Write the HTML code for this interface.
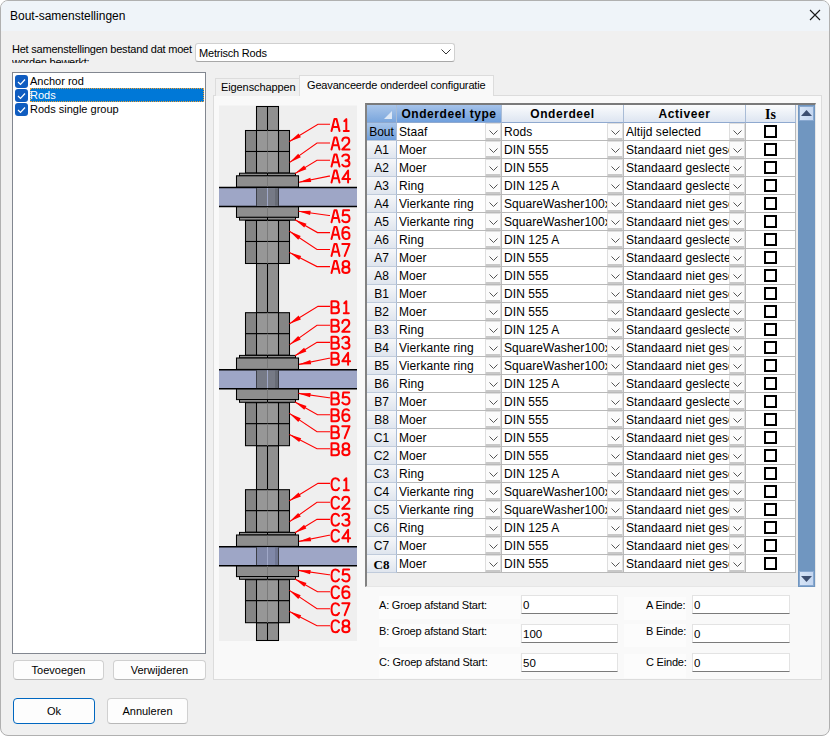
<!DOCTYPE html>
<html><head><meta charset="utf-8"><style>
*{box-sizing:border-box;margin:0;padding:0}
html,body{width:831px;height:737px;overflow:hidden;background:#ffffff;font-family:"Liberation Sans",sans-serif;}
.abs{position:absolute}
#win{position:absolute;left:0px;top:0px;width:830px;height:736px;border:1px solid #b0b0b0;border-radius:8px;background:#f0f0f0;overflow:hidden}
#title{position:absolute;left:0;top:0;width:100%;height:30px;background:#eff4f9}
.t11{font-size:11px;color:#000;white-space:nowrap;position:absolute}
.btn{position:absolute;background:#fdfdfd;border:1px solid #d0d0d0;border-bottom-color:#b8b8b8;border-radius:4px;font-size:11px;text-align:center}
.rh{position:absolute;left:367px;width:30px;height:18px;background:linear-gradient(#f6f7f9,#dfe5ee);border-bottom:1px solid #c0cbdb;border-right:1px solid #a9bcd6;font-size:12px;text-align:center;line-height:18px;color:#000}
.rh span{position:relative;top:0px}
.rh.cur{background:linear-gradient(#a9c6ea,#6f9fdc)}
.c{position:absolute;height:18px;background:#fff;border-right:1px solid #b9b9b9;border-bottom:1px solid #b9b9b9}
.tx{position:absolute;left:2px;top:0;line-height:19px;font-size:12px;letter-spacing:0.07px;white-space:nowrap;overflow:hidden;color:#000}
.dd{position:absolute;right:0px;top:0px;width:16px;height:17px;background:#fbfbfb;border:1px solid #dedede;border-bottom:2px solid #c8c8c8;border-radius:1px}
.cb{position:absolute;left:18px;top:2px;width:13px;height:13px;border:2px solid #000;background:#fff}
.hd{position:absolute;top:105px;height:18px;background:linear-gradient(#fbfcfd,#dde5f1);border-right:1px solid #a9bcd6;border-bottom:1px solid #8fa9cf;font-weight:bold;font-size:12px;letter-spacing:0.55px;text-align:center;line-height:19px;color:#000}
.lbl{font-family:"Liberation Sans",sans-serif;font-size:18.5px;fill:#ff0000;letter-spacing:-0.5px}
.tb{position:absolute;background:#fff;border:1px solid #e3e3e3;border-bottom:1px solid #7a7a7a;font-size:11.5px;line-height:19px;padding-left:1px}
.lp{position:absolute;background:#fcfcfc}
</style></head>
<body>
<div id="win">
 <div id="title"></div>
</div>
<div class="t11" style="left:10px;top:9px;font-size:12px">Bout-samenstellingen</div>
<svg class="abs" style="left:809px;top:9px" width="12" height="12" viewBox="0 0 12 12"><path d="M1 1L11 11M11 1L1 11" stroke="#1a1a1a" stroke-width="1.1"/></svg>

<div class="t11" style="left:12px;top:43px;height:20px;overflow:hidden;width:182px;line-height:13px;letter-spacing:-0.22px">Het samenstellingen bestand dat moet<br>worden bewerkt:</div>
<div class="abs" style="left:195px;top:43px;width:260px;height:19px;background:#fff;border:1px solid #d0d0d0;border-bottom-color:#a8a8a8;border-radius:3px"></div>
<div class="t11" style="left:199px;top:46.5px;letter-spacing:-0.2px">Metrisch Rods</div>
<svg class="abs" style="left:441px;top:49px" width="10" height="6" viewBox="0 0 10 6"><path d="M0.5 0.5L5 5L9.5 0.5" fill="none" stroke="#333" stroke-width="1"/></svg>

<div class="abs" style="left:12px;top:72px;width:194px;height:582px;background:#fff;border:1px solid #828790"></div>
<div class="abs" style="left:30px;top:88px;width:174px;height:14px;background:#0078d7;border:1px dotted #f0a030"></div>
<div class="abs" style="left:15px;top:75px;width:13px;height:13px;background:#0f5cc0;border-radius:3px"></div>
<div class="abs" style="left:15px;top:89px;width:13px;height:13px;background:#0f5cc0;border-radius:3px"></div>
<div class="abs" style="left:15px;top:103px;width:13px;height:13px;background:#0f5cc0;border-radius:3px"></div>
<svg class="abs" style="left:15px;top:75px" width="13" height="42" viewBox="0 0 13 42"><path d="M3 7L5.5 9.5L10 4.5M3 21L5.5 23.5L10 18.5M3 35L5.5 37.5L10 32.5" fill="none" stroke="#fff" stroke-width="1.2"/></svg>
<div class="t11" style="left:30px;top:75px">Anchor rod</div>
<div class="t11" style="left:30px;top:89px;color:#fff">Rods</div>
<div class="t11" style="left:30px;top:103px">Rods single group</div>

<div class="btn" style="left:13px;top:660px;width:91px;height:20px;line-height:18px">Toevoegen</div>
<div class="btn" style="left:113px;top:660px;width:93px;height:20px;line-height:18px">Verwijderen</div>
<div class="btn" style="left:13px;top:698px;width:82px;height:26px;line-height:24px;border:1px solid #0067c0;border-radius:4px">Ok</div>
<div class="btn" style="left:107px;top:698px;width:81px;height:26px;line-height:24px">Annuleren</div>

<!-- tab control -->
<div class="abs" style="left:213px;top:95px;width:609px;height:585px;background:#f9f9f9;border:1px solid #dcdcdc"></div>
<div class="abs" style="left:215px;top:78px;width:85px;height:18px;background:#f0f0f0;border:1px solid #dcdcdc;border-bottom:none"></div>
<div class="t11" style="left:221px;top:81px;font-size:11px;letter-spacing:-0.1px">Eigenschappen</div>
<div class="abs" style="left:299px;top:75px;width:195px;height:21px;background:#f9f9f9;border:1px solid #dcdcdc;border-bottom:none"></div>
<div class="t11" style="left:307px;top:79px;font-size:11px;letter-spacing:-0.16px">Geavanceerde onderdeel configuratie</div>

<svg width="831" height="737" style="position:absolute;left:0;top:0" viewBox="0 0 831 737">
<rect x="219" y="105.5" width="138" height="535.5" fill="#efefef"/>
<rect x="256.5" y="106.5" width="22" height="534" fill="#909090" stroke="#000" stroke-width="1.05"/>
<line x1="267.5" y1="106.5" x2="267.5" y2="640" stroke="#000" stroke-width="1.05"/>
<g transform="translate(0,0)">
<rect x="245.5" y="130.5" width="44" height="21.0" fill="#858585" stroke="#000" stroke-width="1.05"/><rect x="256.5" y="130.5" width="22" height="21.0" fill="#979797" stroke="#000" stroke-width="1.05"/><line x1="267.5" y1="130.5" x2="267.5" y2="151.5" stroke="#7a7a7a" stroke-width="1"/>
<rect x="245.5" y="151.5" width="44" height="21.5" fill="#858585" stroke="#000" stroke-width="1.05"/><rect x="256.5" y="151.5" width="22" height="21.5" fill="#979797" stroke="#000" stroke-width="1.05"/><line x1="267.5" y1="151.5" x2="267.5" y2="173" stroke="#7a7a7a" stroke-width="1"/>
<rect x="239.5" y="173.2" width="56" height="2.6" fill="#8c8c8c" stroke="#000" stroke-width="1"/>
<line x1="267.5" y1="173" x2="267.5" y2="176" stroke="#000" stroke-width="1"/>
<rect x="236.5" y="175.8" width="62" height="11.4" fill="#8e8e8e" stroke="#000" stroke-width="1.05"/>
<line x1="267.5" y1="176.5" x2="267.5" y2="187" stroke="#7a7a7a" stroke-width="1"/>
<rect x="219" y="187.5" width="138" height="19" fill="#9ea6c6" stroke="none"/>
<line x1="219" y1="187.5" x2="357" y2="187.5" stroke="#000" stroke-width="1.4"/>
<line x1="219" y1="206.5" x2="357" y2="206.5" stroke="#000" stroke-width="1.4"/>
<rect x="256.5" y="188.2" width="22" height="17.6" fill="#767a86"/><rect x="275" y="188.2" width="3.5" height="17.6" fill="#000" opacity="0.12"/>
<line x1="256.5" y1="188" x2="256.5" y2="206" stroke="#3c3f48" stroke-width="1"/>
<line x1="278.5" y1="188" x2="278.5" y2="206" stroke="#3c3f48" stroke-width="1"/>
<line x1="267.5" y1="188" x2="267.5" y2="206" stroke="#a0a8c8" stroke-width="1"/>
<rect x="236.5" y="206.8" width="62" height="10.6" fill="#8e8e8e" stroke="#000" stroke-width="1.05"/>
<line x1="267.5" y1="207" x2="267.5" y2="217" stroke="#7a7a7a" stroke-width="1"/>
<rect x="239.5" y="217.3" width="56" height="2.8" fill="#8c8c8c" stroke="#000" stroke-width="1"/>
<line x1="267.5" y1="217" x2="267.5" y2="220" stroke="#000" stroke-width="1"/>
<rect x="245.5" y="220.5" width="44" height="21.0" fill="#858585" stroke="#000" stroke-width="1.05"/><rect x="256.5" y="220.5" width="22" height="21.0" fill="#979797" stroke="#000" stroke-width="1.05"/><line x1="267.5" y1="220.5" x2="267.5" y2="241.5" stroke="#7a7a7a" stroke-width="1"/>
<rect x="245.5" y="241.5" width="44" height="22.0" fill="#858585" stroke="#000" stroke-width="1.05"/><rect x="256.5" y="241.5" width="22" height="22.0" fill="#979797" stroke="#000" stroke-width="1.05"/><line x1="267.5" y1="241.5" x2="267.5" y2="263.5" stroke="#7a7a7a" stroke-width="1"/>
<polyline points="330,124.2 318,124.2 289.5,141.5" fill="none" stroke="#ff0000" stroke-width="1.1"/>
<polygon points="289.5,141.5 298.6,133.4 300.9,137.2" fill="#ff0000"/>
<path d="M0,12 L3,0 L5,0 L8,12 M1.3,7.8 L6.7,7.8" transform="translate(331.50,119.10) scale(1.000)" fill="none" stroke="#ff0000" stroke-width="2.00" stroke-linejoin="round" stroke-linecap="round"/><path d="M2,2 L4,0 L4,12 M1.5,12 L6.5,12" transform="translate(342.30,119.10) scale(1.000)" fill="none" stroke="#ff0000" stroke-width="2.00" stroke-linejoin="round" stroke-linecap="round"/>
<polyline points="330,143.0 317,143.0 289.7,162.4" fill="none" stroke="#ff0000" stroke-width="1.1"/>
<polygon points="289.7,162.4 298.2,153.7 300.8,157.2" fill="#ff0000"/>
<path d="M0,12 L3,0 L5,0 L8,12 M1.3,7.8 L6.7,7.8" transform="translate(331.50,137.50) scale(1.000)" fill="none" stroke="#ff0000" stroke-width="2.00" stroke-linejoin="round" stroke-linecap="round"/><path d="M0,3.2 Q0.3,0 3.6,0 Q7,0 7,3.4 Q7,5.8 3.5,8.3 L0,12 L7.2,12" transform="translate(342.30,137.50) scale(1.000)" fill="none" stroke="#ff0000" stroke-width="2.00" stroke-linejoin="round" stroke-linecap="round"/>
<polyline points="330,160.2 317,160.2 295.0,173.6" fill="none" stroke="#ff0000" stroke-width="1.1"/>
<polygon points="295.0,173.6 304.1,165.5 306.4,169.2" fill="#ff0000"/>
<path d="M0,12 L3,0 L5,0 L8,12 M1.3,7.8 L6.7,7.8" transform="translate(331.50,154.50) scale(1.000)" fill="none" stroke="#ff0000" stroke-width="2.00" stroke-linejoin="round" stroke-linecap="round"/><path d="M0,1.8 Q1,0 3.5,0 Q6.8,0 6.8,3 Q6.8,6 3.2,6 Q7.2,6 7.2,9 Q7.2,12 3.6,12 Q1,12 0,10.2" transform="translate(342.30,154.50) scale(1.000)" fill="none" stroke="#ff0000" stroke-width="2.00" stroke-linejoin="round" stroke-linecap="round"/>
<polyline points="330,176.1 329,176.1 299.0,182.2" fill="none" stroke="#ff0000" stroke-width="1.1"/>
<polygon points="299.0,182.2 310.3,177.7 311.2,182.0" fill="#ff0000"/>
<path d="M0,12 L3,0 L5,0 L8,12 M1.3,7.8 L6.7,7.8" transform="translate(331.50,170.50) scale(1.000)" fill="none" stroke="#ff0000" stroke-width="2.00" stroke-linejoin="round" stroke-linecap="round"/><path d="M5.8,12 L5.8,0 L0,8.5 L7.8,8.5" transform="translate(342.30,170.50) scale(1.000)" fill="none" stroke="#ff0000" stroke-width="2.00" stroke-linejoin="round" stroke-linecap="round"/>
<polyline points="330,215.5 329,215.5 298.5,211.2" fill="none" stroke="#ff0000" stroke-width="1.1"/>
<polygon points="298.5,211.2 310.7,210.7 310.1,215.1" fill="#ff0000"/>
<path d="M0,12 L3,0 L5,0 L8,12 M1.3,7.8 L6.7,7.8" transform="translate(331.50,210.20) scale(1.000)" fill="none" stroke="#ff0000" stroke-width="2.00" stroke-linejoin="round" stroke-linecap="round"/><path d="M6.8,0 L1,0 L0.4,5.2 Q1.8,4.6 3.6,4.6 Q7.2,4.6 7.2,8.3 Q7.2,12 3.6,12 Q1,12 0,10.2" transform="translate(342.30,210.20) scale(1.000)" fill="none" stroke="#ff0000" stroke-width="2.00" stroke-linejoin="round" stroke-linecap="round"/>
<polyline points="330,232.6 317.5,232.6 295.0,219.8" fill="none" stroke="#ff0000" stroke-width="1.1"/>
<polygon points="295.0,219.8 306.5,223.8 304.3,227.6" fill="#ff0000"/>
<path d="M0,12 L3,0 L5,0 L8,12 M1.3,7.8 L6.7,7.8" transform="translate(331.50,227.00) scale(1.000)" fill="none" stroke="#ff0000" stroke-width="2.00" stroke-linejoin="round" stroke-linecap="round"/><path d="M6.6,1.2 Q5.4,0 3.8,0 Q0,0 0,6.3 Q0,12 3.6,12 Q7.2,12 7.2,8.4 Q7.2,5 3.6,5 Q1.2,5 0,7" transform="translate(342.30,227.00) scale(1.000)" fill="none" stroke="#ff0000" stroke-width="2.00" stroke-linejoin="round" stroke-linecap="round"/>
<polyline points="330,249.5 317,249.5 289.5,231.2" fill="none" stroke="#ff0000" stroke-width="1.1"/>
<polygon points="289.5,231.2 300.7,236.0 298.3,239.7" fill="#ff0000"/>
<path d="M0,12 L3,0 L5,0 L8,12 M1.3,7.8 L6.7,7.8" transform="translate(331.50,244.00) scale(1.000)" fill="none" stroke="#ff0000" stroke-width="2.00" stroke-linejoin="round" stroke-linecap="round"/><path d="M0,0 L7.2,0 L2.4,12" transform="translate(342.30,244.00) scale(1.000)" fill="none" stroke="#ff0000" stroke-width="2.00" stroke-linejoin="round" stroke-linecap="round"/>
<polyline points="330,266.6 317,266.6 289.5,252.4" fill="none" stroke="#ff0000" stroke-width="1.1"/>
<polygon points="289.5,252.4 301.2,256.0 299.2,259.9" fill="#ff0000"/>
<path d="M0,12 L3,0 L5,0 L8,12 M1.3,7.8 L6.7,7.8" transform="translate(331.50,261.00) scale(1.000)" fill="none" stroke="#ff0000" stroke-width="2.00" stroke-linejoin="round" stroke-linecap="round"/><path d="M3.6,6 Q6.9,6 6.9,3 Q6.9,0 3.6,0 Q0.3,0 0.3,3 Q0.3,6 3.6,6 Q7.2,6 7.2,9 Q7.2,12 3.6,12 Q0,12 0,9 Q0,6 3.6,6" transform="translate(342.30,261.00) scale(1.000)" fill="none" stroke="#ff0000" stroke-width="2.00" stroke-linejoin="round" stroke-linecap="round"/>
</g>
<g transform="translate(0,182.2)">
<rect x="245.5" y="130.5" width="44" height="21.0" fill="#858585" stroke="#000" stroke-width="1.05"/><rect x="256.5" y="130.5" width="22" height="21.0" fill="#979797" stroke="#000" stroke-width="1.05"/><line x1="267.5" y1="130.5" x2="267.5" y2="151.5" stroke="#7a7a7a" stroke-width="1"/>
<rect x="245.5" y="151.5" width="44" height="21.5" fill="#858585" stroke="#000" stroke-width="1.05"/><rect x="256.5" y="151.5" width="22" height="21.5" fill="#979797" stroke="#000" stroke-width="1.05"/><line x1="267.5" y1="151.5" x2="267.5" y2="173" stroke="#7a7a7a" stroke-width="1"/>
<rect x="239.5" y="173.2" width="56" height="2.6" fill="#8c8c8c" stroke="#000" stroke-width="1"/>
<line x1="267.5" y1="173" x2="267.5" y2="176" stroke="#000" stroke-width="1"/>
<rect x="236.5" y="175.8" width="62" height="11.4" fill="#8e8e8e" stroke="#000" stroke-width="1.05"/>
<line x1="267.5" y1="176.5" x2="267.5" y2="187" stroke="#7a7a7a" stroke-width="1"/>
<rect x="219" y="187.5" width="138" height="19" fill="#9ea6c6" stroke="none"/>
<line x1="219" y1="187.5" x2="357" y2="187.5" stroke="#000" stroke-width="1.4"/>
<line x1="219" y1="206.5" x2="357" y2="206.5" stroke="#000" stroke-width="1.4"/>
<rect x="256.5" y="188.2" width="22" height="17.6" fill="#767a86"/><rect x="275" y="188.2" width="3.5" height="17.6" fill="#000" opacity="0.12"/>
<line x1="256.5" y1="188" x2="256.5" y2="206" stroke="#3c3f48" stroke-width="1"/>
<line x1="278.5" y1="188" x2="278.5" y2="206" stroke="#3c3f48" stroke-width="1"/>
<line x1="267.5" y1="188" x2="267.5" y2="206" stroke="#a0a8c8" stroke-width="1"/>
<rect x="236.5" y="206.8" width="62" height="10.6" fill="#8e8e8e" stroke="#000" stroke-width="1.05"/>
<line x1="267.5" y1="207" x2="267.5" y2="217" stroke="#7a7a7a" stroke-width="1"/>
<rect x="239.5" y="217.3" width="56" height="2.8" fill="#8c8c8c" stroke="#000" stroke-width="1"/>
<line x1="267.5" y1="217" x2="267.5" y2="220" stroke="#000" stroke-width="1"/>
<rect x="245.5" y="220.5" width="44" height="21.0" fill="#858585" stroke="#000" stroke-width="1.05"/><rect x="256.5" y="220.5" width="22" height="21.0" fill="#979797" stroke="#000" stroke-width="1.05"/><line x1="267.5" y1="220.5" x2="267.5" y2="241.5" stroke="#7a7a7a" stroke-width="1"/>
<rect x="245.5" y="241.5" width="44" height="22.0" fill="#858585" stroke="#000" stroke-width="1.05"/><rect x="256.5" y="241.5" width="22" height="22.0" fill="#979797" stroke="#000" stroke-width="1.05"/><line x1="267.5" y1="241.5" x2="267.5" y2="263.5" stroke="#7a7a7a" stroke-width="1"/>
<polyline points="330,124.2 318,124.2 289.5,141.5" fill="none" stroke="#ff0000" stroke-width="1.1"/>
<polygon points="289.5,141.5 298.6,133.4 300.9,137.2" fill="#ff0000"/>
<path d="M0,0 L0,12 L4.5,12 Q7.5,12 7.5,9 Q7.5,6 4.2,6 L0,6 M0,0 L4,0 Q7,0 7,3 Q7,6 4.2,6" transform="translate(331.50,119.10) scale(1.000)" fill="none" stroke="#ff0000" stroke-width="2.00" stroke-linejoin="round" stroke-linecap="round"/><path d="M2,2 L4,0 L4,12 M1.5,12 L6.5,12" transform="translate(342.30,119.10) scale(1.000)" fill="none" stroke="#ff0000" stroke-width="2.00" stroke-linejoin="round" stroke-linecap="round"/>
<polyline points="330,143.0 317,143.0 289.7,162.4" fill="none" stroke="#ff0000" stroke-width="1.1"/>
<polygon points="289.7,162.4 298.2,153.7 300.8,157.2" fill="#ff0000"/>
<path d="M0,0 L0,12 L4.5,12 Q7.5,12 7.5,9 Q7.5,6 4.2,6 L0,6 M0,0 L4,0 Q7,0 7,3 Q7,6 4.2,6" transform="translate(331.50,137.50) scale(1.000)" fill="none" stroke="#ff0000" stroke-width="2.00" stroke-linejoin="round" stroke-linecap="round"/><path d="M0,3.2 Q0.3,0 3.6,0 Q7,0 7,3.4 Q7,5.8 3.5,8.3 L0,12 L7.2,12" transform="translate(342.30,137.50) scale(1.000)" fill="none" stroke="#ff0000" stroke-width="2.00" stroke-linejoin="round" stroke-linecap="round"/>
<polyline points="330,160.2 317,160.2 295.0,173.6" fill="none" stroke="#ff0000" stroke-width="1.1"/>
<polygon points="295.0,173.6 304.1,165.5 306.4,169.2" fill="#ff0000"/>
<path d="M0,0 L0,12 L4.5,12 Q7.5,12 7.5,9 Q7.5,6 4.2,6 L0,6 M0,0 L4,0 Q7,0 7,3 Q7,6 4.2,6" transform="translate(331.50,154.50) scale(1.000)" fill="none" stroke="#ff0000" stroke-width="2.00" stroke-linejoin="round" stroke-linecap="round"/><path d="M0,1.8 Q1,0 3.5,0 Q6.8,0 6.8,3 Q6.8,6 3.2,6 Q7.2,6 7.2,9 Q7.2,12 3.6,12 Q1,12 0,10.2" transform="translate(342.30,154.50) scale(1.000)" fill="none" stroke="#ff0000" stroke-width="2.00" stroke-linejoin="round" stroke-linecap="round"/>
<polyline points="330,176.1 329,176.1 299.0,182.2" fill="none" stroke="#ff0000" stroke-width="1.1"/>
<polygon points="299.0,182.2 310.3,177.7 311.2,182.0" fill="#ff0000"/>
<path d="M0,0 L0,12 L4.5,12 Q7.5,12 7.5,9 Q7.5,6 4.2,6 L0,6 M0,0 L4,0 Q7,0 7,3 Q7,6 4.2,6" transform="translate(331.50,170.50) scale(1.000)" fill="none" stroke="#ff0000" stroke-width="2.00" stroke-linejoin="round" stroke-linecap="round"/><path d="M5.8,12 L5.8,0 L0,8.5 L7.8,8.5" transform="translate(342.30,170.50) scale(1.000)" fill="none" stroke="#ff0000" stroke-width="2.00" stroke-linejoin="round" stroke-linecap="round"/>
<polyline points="330,215.5 329,215.5 298.5,211.2" fill="none" stroke="#ff0000" stroke-width="1.1"/>
<polygon points="298.5,211.2 310.7,210.7 310.1,215.1" fill="#ff0000"/>
<path d="M0,0 L0,12 L4.5,12 Q7.5,12 7.5,9 Q7.5,6 4.2,6 L0,6 M0,0 L4,0 Q7,0 7,3 Q7,6 4.2,6" transform="translate(331.50,210.20) scale(1.000)" fill="none" stroke="#ff0000" stroke-width="2.00" stroke-linejoin="round" stroke-linecap="round"/><path d="M6.8,0 L1,0 L0.4,5.2 Q1.8,4.6 3.6,4.6 Q7.2,4.6 7.2,8.3 Q7.2,12 3.6,12 Q1,12 0,10.2" transform="translate(342.30,210.20) scale(1.000)" fill="none" stroke="#ff0000" stroke-width="2.00" stroke-linejoin="round" stroke-linecap="round"/>
<polyline points="330,232.6 317.5,232.6 295.0,219.8" fill="none" stroke="#ff0000" stroke-width="1.1"/>
<polygon points="295.0,219.8 306.5,223.8 304.3,227.6" fill="#ff0000"/>
<path d="M0,0 L0,12 L4.5,12 Q7.5,12 7.5,9 Q7.5,6 4.2,6 L0,6 M0,0 L4,0 Q7,0 7,3 Q7,6 4.2,6" transform="translate(331.50,227.00) scale(1.000)" fill="none" stroke="#ff0000" stroke-width="2.00" stroke-linejoin="round" stroke-linecap="round"/><path d="M6.6,1.2 Q5.4,0 3.8,0 Q0,0 0,6.3 Q0,12 3.6,12 Q7.2,12 7.2,8.4 Q7.2,5 3.6,5 Q1.2,5 0,7" transform="translate(342.30,227.00) scale(1.000)" fill="none" stroke="#ff0000" stroke-width="2.00" stroke-linejoin="round" stroke-linecap="round"/>
<polyline points="330,249.5 317,249.5 289.5,231.2" fill="none" stroke="#ff0000" stroke-width="1.1"/>
<polygon points="289.5,231.2 300.7,236.0 298.3,239.7" fill="#ff0000"/>
<path d="M0,0 L0,12 L4.5,12 Q7.5,12 7.5,9 Q7.5,6 4.2,6 L0,6 M0,0 L4,0 Q7,0 7,3 Q7,6 4.2,6" transform="translate(331.50,244.00) scale(1.000)" fill="none" stroke="#ff0000" stroke-width="2.00" stroke-linejoin="round" stroke-linecap="round"/><path d="M0,0 L7.2,0 L2.4,12" transform="translate(342.30,244.00) scale(1.000)" fill="none" stroke="#ff0000" stroke-width="2.00" stroke-linejoin="round" stroke-linecap="round"/>
<polyline points="330,266.6 317,266.6 289.5,252.4" fill="none" stroke="#ff0000" stroke-width="1.1"/>
<polygon points="289.5,252.4 301.2,256.0 299.2,259.9" fill="#ff0000"/>
<path d="M0,0 L0,12 L4.5,12 Q7.5,12 7.5,9 Q7.5,6 4.2,6 L0,6 M0,0 L4,0 Q7,0 7,3 Q7,6 4.2,6" transform="translate(331.50,261.00) scale(1.000)" fill="none" stroke="#ff0000" stroke-width="2.00" stroke-linejoin="round" stroke-linecap="round"/><path d="M3.6,6 Q6.9,6 6.9,3 Q6.9,0 3.6,0 Q0.3,0 0.3,3 Q0.3,6 3.6,6 Q7.2,6 7.2,9 Q7.2,12 3.6,12 Q0,12 0,9 Q0,6 3.6,6" transform="translate(342.30,261.00) scale(1.000)" fill="none" stroke="#ff0000" stroke-width="2.00" stroke-linejoin="round" stroke-linecap="round"/>
</g>
<g transform="translate(0,359.2)">
<rect x="245.5" y="130.5" width="44" height="21.0" fill="#858585" stroke="#000" stroke-width="1.05"/><rect x="256.5" y="130.5" width="22" height="21.0" fill="#979797" stroke="#000" stroke-width="1.05"/><line x1="267.5" y1="130.5" x2="267.5" y2="151.5" stroke="#7a7a7a" stroke-width="1"/>
<rect x="245.5" y="151.5" width="44" height="21.5" fill="#858585" stroke="#000" stroke-width="1.05"/><rect x="256.5" y="151.5" width="22" height="21.5" fill="#979797" stroke="#000" stroke-width="1.05"/><line x1="267.5" y1="151.5" x2="267.5" y2="173" stroke="#7a7a7a" stroke-width="1"/>
<rect x="239.5" y="173.2" width="56" height="2.6" fill="#8c8c8c" stroke="#000" stroke-width="1"/>
<line x1="267.5" y1="173" x2="267.5" y2="176" stroke="#000" stroke-width="1"/>
<rect x="236.5" y="175.8" width="62" height="11.4" fill="#8e8e8e" stroke="#000" stroke-width="1.05"/>
<line x1="267.5" y1="176.5" x2="267.5" y2="187" stroke="#7a7a7a" stroke-width="1"/>
<rect x="219" y="187.5" width="138" height="19" fill="#9ea6c6" stroke="none"/>
<line x1="219" y1="187.5" x2="357" y2="187.5" stroke="#000" stroke-width="1.4"/>
<line x1="219" y1="206.5" x2="357" y2="206.5" stroke="#000" stroke-width="1.4"/>
<rect x="256.5" y="188.2" width="22" height="17.6" fill="#8088a8"/><rect x="275" y="188.2" width="3.5" height="17.6" fill="#000" opacity="0.12"/>
<line x1="256.5" y1="188" x2="256.5" y2="206" stroke="#3c3f48" stroke-width="1"/>
<line x1="278.5" y1="188" x2="278.5" y2="206" stroke="#3c3f48" stroke-width="1"/>
<line x1="267.5" y1="188" x2="267.5" y2="206" stroke="#a0a8c8" stroke-width="1"/>
<rect x="236.5" y="206.8" width="62" height="10.6" fill="#8e8e8e" stroke="#000" stroke-width="1.05"/>
<line x1="267.5" y1="207" x2="267.5" y2="217" stroke="#7a7a7a" stroke-width="1"/>
<rect x="239.5" y="217.3" width="56" height="2.8" fill="#8c8c8c" stroke="#000" stroke-width="1"/>
<line x1="267.5" y1="217" x2="267.5" y2="220" stroke="#000" stroke-width="1"/>
<rect x="245.5" y="220.5" width="44" height="21.0" fill="#858585" stroke="#000" stroke-width="1.05"/><rect x="256.5" y="220.5" width="22" height="21.0" fill="#979797" stroke="#000" stroke-width="1.05"/><line x1="267.5" y1="220.5" x2="267.5" y2="241.5" stroke="#7a7a7a" stroke-width="1"/>
<rect x="245.5" y="241.5" width="44" height="22.0" fill="#858585" stroke="#000" stroke-width="1.05"/><rect x="256.5" y="241.5" width="22" height="22.0" fill="#979797" stroke="#000" stroke-width="1.05"/><line x1="267.5" y1="241.5" x2="267.5" y2="263.5" stroke="#7a7a7a" stroke-width="1"/>
<polyline points="330,124.2 318,124.2 289.5,141.5" fill="none" stroke="#ff0000" stroke-width="1.1"/>
<polygon points="289.5,141.5 298.6,133.4 300.9,137.2" fill="#ff0000"/>
<path d="M7.5,2.2 Q6.5,0 4,0 Q0,0 0,6 Q0,12 4,12 Q6.5,12 7.5,9.8" transform="translate(331.50,119.10) scale(1.000)" fill="none" stroke="#ff0000" stroke-width="2.00" stroke-linejoin="round" stroke-linecap="round"/><path d="M2,2 L4,0 L4,12 M1.5,12 L6.5,12" transform="translate(342.30,119.10) scale(1.000)" fill="none" stroke="#ff0000" stroke-width="2.00" stroke-linejoin="round" stroke-linecap="round"/>
<polyline points="330,143.0 317,143.0 289.7,162.4" fill="none" stroke="#ff0000" stroke-width="1.1"/>
<polygon points="289.7,162.4 298.2,153.7 300.8,157.2" fill="#ff0000"/>
<path d="M7.5,2.2 Q6.5,0 4,0 Q0,0 0,6 Q0,12 4,12 Q6.5,12 7.5,9.8" transform="translate(331.50,137.50) scale(1.000)" fill="none" stroke="#ff0000" stroke-width="2.00" stroke-linejoin="round" stroke-linecap="round"/><path d="M0,3.2 Q0.3,0 3.6,0 Q7,0 7,3.4 Q7,5.8 3.5,8.3 L0,12 L7.2,12" transform="translate(342.30,137.50) scale(1.000)" fill="none" stroke="#ff0000" stroke-width="2.00" stroke-linejoin="round" stroke-linecap="round"/>
<polyline points="330,160.2 317,160.2 295.0,173.6" fill="none" stroke="#ff0000" stroke-width="1.1"/>
<polygon points="295.0,173.6 304.1,165.5 306.4,169.2" fill="#ff0000"/>
<path d="M7.5,2.2 Q6.5,0 4,0 Q0,0 0,6 Q0,12 4,12 Q6.5,12 7.5,9.8" transform="translate(331.50,154.50) scale(1.000)" fill="none" stroke="#ff0000" stroke-width="2.00" stroke-linejoin="round" stroke-linecap="round"/><path d="M0,1.8 Q1,0 3.5,0 Q6.8,0 6.8,3 Q6.8,6 3.2,6 Q7.2,6 7.2,9 Q7.2,12 3.6,12 Q1,12 0,10.2" transform="translate(342.30,154.50) scale(1.000)" fill="none" stroke="#ff0000" stroke-width="2.00" stroke-linejoin="round" stroke-linecap="round"/>
<polyline points="330,176.1 329,176.1 299.0,182.2" fill="none" stroke="#ff0000" stroke-width="1.1"/>
<polygon points="299.0,182.2 310.3,177.7 311.2,182.0" fill="#ff0000"/>
<path d="M7.5,2.2 Q6.5,0 4,0 Q0,0 0,6 Q0,12 4,12 Q6.5,12 7.5,9.8" transform="translate(331.50,170.50) scale(1.000)" fill="none" stroke="#ff0000" stroke-width="2.00" stroke-linejoin="round" stroke-linecap="round"/><path d="M5.8,12 L5.8,0 L0,8.5 L7.8,8.5" transform="translate(342.30,170.50) scale(1.000)" fill="none" stroke="#ff0000" stroke-width="2.00" stroke-linejoin="round" stroke-linecap="round"/>
<polyline points="330,215.5 329,215.5 298.5,211.2" fill="none" stroke="#ff0000" stroke-width="1.1"/>
<polygon points="298.5,211.2 310.7,210.7 310.1,215.1" fill="#ff0000"/>
<path d="M7.5,2.2 Q6.5,0 4,0 Q0,0 0,6 Q0,12 4,12 Q6.5,12 7.5,9.8" transform="translate(331.50,210.20) scale(1.000)" fill="none" stroke="#ff0000" stroke-width="2.00" stroke-linejoin="round" stroke-linecap="round"/><path d="M6.8,0 L1,0 L0.4,5.2 Q1.8,4.6 3.6,4.6 Q7.2,4.6 7.2,8.3 Q7.2,12 3.6,12 Q1,12 0,10.2" transform="translate(342.30,210.20) scale(1.000)" fill="none" stroke="#ff0000" stroke-width="2.00" stroke-linejoin="round" stroke-linecap="round"/>
<polyline points="330,232.6 317.5,232.6 295.0,219.8" fill="none" stroke="#ff0000" stroke-width="1.1"/>
<polygon points="295.0,219.8 306.5,223.8 304.3,227.6" fill="#ff0000"/>
<path d="M7.5,2.2 Q6.5,0 4,0 Q0,0 0,6 Q0,12 4,12 Q6.5,12 7.5,9.8" transform="translate(331.50,227.00) scale(1.000)" fill="none" stroke="#ff0000" stroke-width="2.00" stroke-linejoin="round" stroke-linecap="round"/><path d="M6.6,1.2 Q5.4,0 3.8,0 Q0,0 0,6.3 Q0,12 3.6,12 Q7.2,12 7.2,8.4 Q7.2,5 3.6,5 Q1.2,5 0,7" transform="translate(342.30,227.00) scale(1.000)" fill="none" stroke="#ff0000" stroke-width="2.00" stroke-linejoin="round" stroke-linecap="round"/>
<polyline points="330,249.5 317,249.5 289.5,231.2" fill="none" stroke="#ff0000" stroke-width="1.1"/>
<polygon points="289.5,231.2 300.7,236.0 298.3,239.7" fill="#ff0000"/>
<path d="M7.5,2.2 Q6.5,0 4,0 Q0,0 0,6 Q0,12 4,12 Q6.5,12 7.5,9.8" transform="translate(331.50,244.00) scale(1.000)" fill="none" stroke="#ff0000" stroke-width="2.00" stroke-linejoin="round" stroke-linecap="round"/><path d="M0,0 L7.2,0 L2.4,12" transform="translate(342.30,244.00) scale(1.000)" fill="none" stroke="#ff0000" stroke-width="2.00" stroke-linejoin="round" stroke-linecap="round"/>
<polyline points="330,266.6 317,266.6 289.5,252.4" fill="none" stroke="#ff0000" stroke-width="1.1"/>
<polygon points="289.5,252.4 301.2,256.0 299.2,259.9" fill="#ff0000"/>
<path d="M7.5,2.2 Q6.5,0 4,0 Q0,0 0,6 Q0,12 4,12 Q6.5,12 7.5,9.8" transform="translate(331.50,261.00) scale(1.000)" fill="none" stroke="#ff0000" stroke-width="2.00" stroke-linejoin="round" stroke-linecap="round"/><path d="M3.6,6 Q6.9,6 6.9,3 Q6.9,0 3.6,0 Q0.3,0 0.3,3 Q0.3,6 3.6,6 Q7.2,6 7.2,9 Q7.2,12 3.6,12 Q0,12 0,9 Q0,6 3.6,6" transform="translate(342.30,261.00) scale(1.000)" fill="none" stroke="#ff0000" stroke-width="2.00" stroke-linejoin="round" stroke-linecap="round"/>
</g>
</svg>

<!-- grid -->
<div class="abs" style="left:365px;top:103px;width:451px;height:484px;background:#eeeeee;border-left:2px solid #828282;border-top:2px solid #7a7a7a;border-right:1px solid #e6e6e6;border-bottom:1px solid #e6e6e6"></div>
<div class="hd" style="left:367px;width:30px;background:linear-gradient(#aac6ea,#7aa6dd)"></div>
<svg class="abs" style="left:384px;top:111px" width="8" height="8" viewBox="0 0 8 8"><path d="M8 0L8 8L0 8Z" fill="#dde8f6"/></svg>
<div class="hd" style="left:397px;width:105px;background:linear-gradient(#a6c3ea,#6f9fdc)">Onderdeel type</div>
<div class="hd" style="left:502px;width:122px">Onderdeel</div>
<div class="hd" style="left:624px;width:122px">Activeer</div>
<div class="hd" style="left:746px;width:50px;font-family:'Liberation Serif',serif;font-size:14px;letter-spacing:0">Is</div>
<div class="rh cur" style="top:123px"><span>Bout</span></div>
<div class="c" style="left:397px;top:123px;width:105px"><span class="tx" style="width:86px">Staaf</span><div class="dd"><svg width="9" height="5" viewBox="0 0 9 5" style="position:absolute;left:2.5px;top:6px"><path d="M0.5 0.5 L4.5 4.5 L8.5 0.5" fill="none" stroke="#555" stroke-width="1"/></svg></div></div>
<div class="c" style="left:502px;top:123px;width:122px"><span class="tx" style="width:103px">Rods</span><div class="dd"><svg width="9" height="5" viewBox="0 0 9 5" style="position:absolute;left:2.5px;top:6px"><path d="M0.5 0.5 L4.5 4.5 L8.5 0.5" fill="none" stroke="#555" stroke-width="1"/></svg></div></div>
<div class="c" style="left:624px;top:123px;width:122px"><span class="tx" style="width:103px">Altijd selected</span><div class="dd"><svg width="9" height="5" viewBox="0 0 9 5" style="position:absolute;left:2.5px;top:6px"><path d="M0.5 0.5 L4.5 4.5 L8.5 0.5" fill="none" stroke="#555" stroke-width="1"/></svg></div></div>
<div class="c" style="left:746px;top:123px;width:50px"><div class="cb"></div></div>
<div class="rh" style="top:141px"><span>A1</span></div>
<div class="c" style="left:397px;top:141px;width:105px"><span class="tx" style="width:86px">Moer</span><div class="dd"><svg width="9" height="5" viewBox="0 0 9 5" style="position:absolute;left:2.5px;top:6px"><path d="M0.5 0.5 L4.5 4.5 L8.5 0.5" fill="none" stroke="#555" stroke-width="1"/></svg></div></div>
<div class="c" style="left:502px;top:141px;width:122px"><span class="tx" style="width:103px">DIN 555</span><div class="dd"><svg width="9" height="5" viewBox="0 0 9 5" style="position:absolute;left:2.5px;top:6px"><path d="M0.5 0.5 L4.5 4.5 L8.5 0.5" fill="none" stroke="#555" stroke-width="1"/></svg></div></div>
<div class="c" style="left:624px;top:141px;width:122px"><span class="tx" style="width:103px">Standaard niet geselecteerd</span><div class="dd"><svg width="9" height="5" viewBox="0 0 9 5" style="position:absolute;left:2.5px;top:6px"><path d="M0.5 0.5 L4.5 4.5 L8.5 0.5" fill="none" stroke="#555" stroke-width="1"/></svg></div></div>
<div class="c" style="left:746px;top:141px;width:50px"><div class="cb"></div></div>
<div class="rh" style="top:159px"><span>A2</span></div>
<div class="c" style="left:397px;top:159px;width:105px"><span class="tx" style="width:86px">Moer</span><div class="dd"><svg width="9" height="5" viewBox="0 0 9 5" style="position:absolute;left:2.5px;top:6px"><path d="M0.5 0.5 L4.5 4.5 L8.5 0.5" fill="none" stroke="#555" stroke-width="1"/></svg></div></div>
<div class="c" style="left:502px;top:159px;width:122px"><span class="tx" style="width:103px">DIN 555</span><div class="dd"><svg width="9" height="5" viewBox="0 0 9 5" style="position:absolute;left:2.5px;top:6px"><path d="M0.5 0.5 L4.5 4.5 L8.5 0.5" fill="none" stroke="#555" stroke-width="1"/></svg></div></div>
<div class="c" style="left:624px;top:159px;width:122px"><span class="tx" style="width:103px">Standaard geslecteerd</span><div class="dd"><svg width="9" height="5" viewBox="0 0 9 5" style="position:absolute;left:2.5px;top:6px"><path d="M0.5 0.5 L4.5 4.5 L8.5 0.5" fill="none" stroke="#555" stroke-width="1"/></svg></div></div>
<div class="c" style="left:746px;top:159px;width:50px"><div class="cb"></div></div>
<div class="rh" style="top:177px"><span>A3</span></div>
<div class="c" style="left:397px;top:177px;width:105px"><span class="tx" style="width:86px">Ring</span><div class="dd"><svg width="9" height="5" viewBox="0 0 9 5" style="position:absolute;left:2.5px;top:6px"><path d="M0.5 0.5 L4.5 4.5 L8.5 0.5" fill="none" stroke="#555" stroke-width="1"/></svg></div></div>
<div class="c" style="left:502px;top:177px;width:122px"><span class="tx" style="width:103px">DIN 125 A</span><div class="dd"><svg width="9" height="5" viewBox="0 0 9 5" style="position:absolute;left:2.5px;top:6px"><path d="M0.5 0.5 L4.5 4.5 L8.5 0.5" fill="none" stroke="#555" stroke-width="1"/></svg></div></div>
<div class="c" style="left:624px;top:177px;width:122px"><span class="tx" style="width:103px">Standaard geslecteerd</span><div class="dd"><svg width="9" height="5" viewBox="0 0 9 5" style="position:absolute;left:2.5px;top:6px"><path d="M0.5 0.5 L4.5 4.5 L8.5 0.5" fill="none" stroke="#555" stroke-width="1"/></svg></div></div>
<div class="c" style="left:746px;top:177px;width:50px"><div class="cb"></div></div>
<div class="rh" style="top:195px"><span>A4</span></div>
<div class="c" style="left:397px;top:195px;width:105px"><span class="tx" style="width:86px">Vierkante ring</span><div class="dd"><svg width="9" height="5" viewBox="0 0 9 5" style="position:absolute;left:2.5px;top:6px"><path d="M0.5 0.5 L4.5 4.5 L8.5 0.5" fill="none" stroke="#555" stroke-width="1"/></svg></div></div>
<div class="c" style="left:502px;top:195px;width:122px"><span class="tx" style="width:103px">SquareWasher100x100x10</span><div class="dd"><svg width="9" height="5" viewBox="0 0 9 5" style="position:absolute;left:2.5px;top:6px"><path d="M0.5 0.5 L4.5 4.5 L8.5 0.5" fill="none" stroke="#555" stroke-width="1"/></svg></div></div>
<div class="c" style="left:624px;top:195px;width:122px"><span class="tx" style="width:103px">Standaard niet geselecteerd</span><div class="dd"><svg width="9" height="5" viewBox="0 0 9 5" style="position:absolute;left:2.5px;top:6px"><path d="M0.5 0.5 L4.5 4.5 L8.5 0.5" fill="none" stroke="#555" stroke-width="1"/></svg></div></div>
<div class="c" style="left:746px;top:195px;width:50px"><div class="cb"></div></div>
<div class="rh" style="top:213px"><span>A5</span></div>
<div class="c" style="left:397px;top:213px;width:105px"><span class="tx" style="width:86px">Vierkante ring</span><div class="dd"><svg width="9" height="5" viewBox="0 0 9 5" style="position:absolute;left:2.5px;top:6px"><path d="M0.5 0.5 L4.5 4.5 L8.5 0.5" fill="none" stroke="#555" stroke-width="1"/></svg></div></div>
<div class="c" style="left:502px;top:213px;width:122px"><span class="tx" style="width:103px">SquareWasher100x100x10</span><div class="dd"><svg width="9" height="5" viewBox="0 0 9 5" style="position:absolute;left:2.5px;top:6px"><path d="M0.5 0.5 L4.5 4.5 L8.5 0.5" fill="none" stroke="#555" stroke-width="1"/></svg></div></div>
<div class="c" style="left:624px;top:213px;width:122px"><span class="tx" style="width:103px">Standaard niet geselecteerd</span><div class="dd"><svg width="9" height="5" viewBox="0 0 9 5" style="position:absolute;left:2.5px;top:6px"><path d="M0.5 0.5 L4.5 4.5 L8.5 0.5" fill="none" stroke="#555" stroke-width="1"/></svg></div></div>
<div class="c" style="left:746px;top:213px;width:50px"><div class="cb"></div></div>
<div class="rh" style="top:231px"><span>A6</span></div>
<div class="c" style="left:397px;top:231px;width:105px"><span class="tx" style="width:86px">Ring</span><div class="dd"><svg width="9" height="5" viewBox="0 0 9 5" style="position:absolute;left:2.5px;top:6px"><path d="M0.5 0.5 L4.5 4.5 L8.5 0.5" fill="none" stroke="#555" stroke-width="1"/></svg></div></div>
<div class="c" style="left:502px;top:231px;width:122px"><span class="tx" style="width:103px">DIN 125 A</span><div class="dd"><svg width="9" height="5" viewBox="0 0 9 5" style="position:absolute;left:2.5px;top:6px"><path d="M0.5 0.5 L4.5 4.5 L8.5 0.5" fill="none" stroke="#555" stroke-width="1"/></svg></div></div>
<div class="c" style="left:624px;top:231px;width:122px"><span class="tx" style="width:103px">Standaard geslecteerd</span><div class="dd"><svg width="9" height="5" viewBox="0 0 9 5" style="position:absolute;left:2.5px;top:6px"><path d="M0.5 0.5 L4.5 4.5 L8.5 0.5" fill="none" stroke="#555" stroke-width="1"/></svg></div></div>
<div class="c" style="left:746px;top:231px;width:50px"><div class="cb"></div></div>
<div class="rh" style="top:249px"><span>A7</span></div>
<div class="c" style="left:397px;top:249px;width:105px"><span class="tx" style="width:86px">Moer</span><div class="dd"><svg width="9" height="5" viewBox="0 0 9 5" style="position:absolute;left:2.5px;top:6px"><path d="M0.5 0.5 L4.5 4.5 L8.5 0.5" fill="none" stroke="#555" stroke-width="1"/></svg></div></div>
<div class="c" style="left:502px;top:249px;width:122px"><span class="tx" style="width:103px">DIN 555</span><div class="dd"><svg width="9" height="5" viewBox="0 0 9 5" style="position:absolute;left:2.5px;top:6px"><path d="M0.5 0.5 L4.5 4.5 L8.5 0.5" fill="none" stroke="#555" stroke-width="1"/></svg></div></div>
<div class="c" style="left:624px;top:249px;width:122px"><span class="tx" style="width:103px">Standaard geslecteerd</span><div class="dd"><svg width="9" height="5" viewBox="0 0 9 5" style="position:absolute;left:2.5px;top:6px"><path d="M0.5 0.5 L4.5 4.5 L8.5 0.5" fill="none" stroke="#555" stroke-width="1"/></svg></div></div>
<div class="c" style="left:746px;top:249px;width:50px"><div class="cb"></div></div>
<div class="rh" style="top:267px"><span>A8</span></div>
<div class="c" style="left:397px;top:267px;width:105px"><span class="tx" style="width:86px">Moer</span><div class="dd"><svg width="9" height="5" viewBox="0 0 9 5" style="position:absolute;left:2.5px;top:6px"><path d="M0.5 0.5 L4.5 4.5 L8.5 0.5" fill="none" stroke="#555" stroke-width="1"/></svg></div></div>
<div class="c" style="left:502px;top:267px;width:122px"><span class="tx" style="width:103px">DIN 555</span><div class="dd"><svg width="9" height="5" viewBox="0 0 9 5" style="position:absolute;left:2.5px;top:6px"><path d="M0.5 0.5 L4.5 4.5 L8.5 0.5" fill="none" stroke="#555" stroke-width="1"/></svg></div></div>
<div class="c" style="left:624px;top:267px;width:122px"><span class="tx" style="width:103px">Standaard niet geselecteerd</span><div class="dd"><svg width="9" height="5" viewBox="0 0 9 5" style="position:absolute;left:2.5px;top:6px"><path d="M0.5 0.5 L4.5 4.5 L8.5 0.5" fill="none" stroke="#555" stroke-width="1"/></svg></div></div>
<div class="c" style="left:746px;top:267px;width:50px"><div class="cb"></div></div>
<div class="rh" style="top:285px"><span>B1</span></div>
<div class="c" style="left:397px;top:285px;width:105px"><span class="tx" style="width:86px">Moer</span><div class="dd"><svg width="9" height="5" viewBox="0 0 9 5" style="position:absolute;left:2.5px;top:6px"><path d="M0.5 0.5 L4.5 4.5 L8.5 0.5" fill="none" stroke="#555" stroke-width="1"/></svg></div></div>
<div class="c" style="left:502px;top:285px;width:122px"><span class="tx" style="width:103px">DIN 555</span><div class="dd"><svg width="9" height="5" viewBox="0 0 9 5" style="position:absolute;left:2.5px;top:6px"><path d="M0.5 0.5 L4.5 4.5 L8.5 0.5" fill="none" stroke="#555" stroke-width="1"/></svg></div></div>
<div class="c" style="left:624px;top:285px;width:122px"><span class="tx" style="width:103px">Standaard niet geselecteerd</span><div class="dd"><svg width="9" height="5" viewBox="0 0 9 5" style="position:absolute;left:2.5px;top:6px"><path d="M0.5 0.5 L4.5 4.5 L8.5 0.5" fill="none" stroke="#555" stroke-width="1"/></svg></div></div>
<div class="c" style="left:746px;top:285px;width:50px"><div class="cb"></div></div>
<div class="rh" style="top:303px"><span>B2</span></div>
<div class="c" style="left:397px;top:303px;width:105px"><span class="tx" style="width:86px">Moer</span><div class="dd"><svg width="9" height="5" viewBox="0 0 9 5" style="position:absolute;left:2.5px;top:6px"><path d="M0.5 0.5 L4.5 4.5 L8.5 0.5" fill="none" stroke="#555" stroke-width="1"/></svg></div></div>
<div class="c" style="left:502px;top:303px;width:122px"><span class="tx" style="width:103px">DIN 555</span><div class="dd"><svg width="9" height="5" viewBox="0 0 9 5" style="position:absolute;left:2.5px;top:6px"><path d="M0.5 0.5 L4.5 4.5 L8.5 0.5" fill="none" stroke="#555" stroke-width="1"/></svg></div></div>
<div class="c" style="left:624px;top:303px;width:122px"><span class="tx" style="width:103px">Standaard geslecteerd</span><div class="dd"><svg width="9" height="5" viewBox="0 0 9 5" style="position:absolute;left:2.5px;top:6px"><path d="M0.5 0.5 L4.5 4.5 L8.5 0.5" fill="none" stroke="#555" stroke-width="1"/></svg></div></div>
<div class="c" style="left:746px;top:303px;width:50px"><div class="cb"></div></div>
<div class="rh" style="top:321px"><span>B3</span></div>
<div class="c" style="left:397px;top:321px;width:105px"><span class="tx" style="width:86px">Ring</span><div class="dd"><svg width="9" height="5" viewBox="0 0 9 5" style="position:absolute;left:2.5px;top:6px"><path d="M0.5 0.5 L4.5 4.5 L8.5 0.5" fill="none" stroke="#555" stroke-width="1"/></svg></div></div>
<div class="c" style="left:502px;top:321px;width:122px"><span class="tx" style="width:103px">DIN 125 A</span><div class="dd"><svg width="9" height="5" viewBox="0 0 9 5" style="position:absolute;left:2.5px;top:6px"><path d="M0.5 0.5 L4.5 4.5 L8.5 0.5" fill="none" stroke="#555" stroke-width="1"/></svg></div></div>
<div class="c" style="left:624px;top:321px;width:122px"><span class="tx" style="width:103px">Standaard geslecteerd</span><div class="dd"><svg width="9" height="5" viewBox="0 0 9 5" style="position:absolute;left:2.5px;top:6px"><path d="M0.5 0.5 L4.5 4.5 L8.5 0.5" fill="none" stroke="#555" stroke-width="1"/></svg></div></div>
<div class="c" style="left:746px;top:321px;width:50px"><div class="cb"></div></div>
<div class="rh" style="top:339px"><span>B4</span></div>
<div class="c" style="left:397px;top:339px;width:105px"><span class="tx" style="width:86px">Vierkante ring</span><div class="dd"><svg width="9" height="5" viewBox="0 0 9 5" style="position:absolute;left:2.5px;top:6px"><path d="M0.5 0.5 L4.5 4.5 L8.5 0.5" fill="none" stroke="#555" stroke-width="1"/></svg></div></div>
<div class="c" style="left:502px;top:339px;width:122px"><span class="tx" style="width:103px">SquareWasher100x100x10</span><div class="dd"><svg width="9" height="5" viewBox="0 0 9 5" style="position:absolute;left:2.5px;top:6px"><path d="M0.5 0.5 L4.5 4.5 L8.5 0.5" fill="none" stroke="#555" stroke-width="1"/></svg></div></div>
<div class="c" style="left:624px;top:339px;width:122px"><span class="tx" style="width:103px">Standaard niet geselecteerd</span><div class="dd"><svg width="9" height="5" viewBox="0 0 9 5" style="position:absolute;left:2.5px;top:6px"><path d="M0.5 0.5 L4.5 4.5 L8.5 0.5" fill="none" stroke="#555" stroke-width="1"/></svg></div></div>
<div class="c" style="left:746px;top:339px;width:50px"><div class="cb"></div></div>
<div class="rh" style="top:357px"><span>B5</span></div>
<div class="c" style="left:397px;top:357px;width:105px"><span class="tx" style="width:86px">Vierkante ring</span><div class="dd"><svg width="9" height="5" viewBox="0 0 9 5" style="position:absolute;left:2.5px;top:6px"><path d="M0.5 0.5 L4.5 4.5 L8.5 0.5" fill="none" stroke="#555" stroke-width="1"/></svg></div></div>
<div class="c" style="left:502px;top:357px;width:122px"><span class="tx" style="width:103px">SquareWasher100x100x10</span><div class="dd"><svg width="9" height="5" viewBox="0 0 9 5" style="position:absolute;left:2.5px;top:6px"><path d="M0.5 0.5 L4.5 4.5 L8.5 0.5" fill="none" stroke="#555" stroke-width="1"/></svg></div></div>
<div class="c" style="left:624px;top:357px;width:122px"><span class="tx" style="width:103px">Standaard niet geselecteerd</span><div class="dd"><svg width="9" height="5" viewBox="0 0 9 5" style="position:absolute;left:2.5px;top:6px"><path d="M0.5 0.5 L4.5 4.5 L8.5 0.5" fill="none" stroke="#555" stroke-width="1"/></svg></div></div>
<div class="c" style="left:746px;top:357px;width:50px"><div class="cb"></div></div>
<div class="rh" style="top:375px"><span>B6</span></div>
<div class="c" style="left:397px;top:375px;width:105px"><span class="tx" style="width:86px">Ring</span><div class="dd"><svg width="9" height="5" viewBox="0 0 9 5" style="position:absolute;left:2.5px;top:6px"><path d="M0.5 0.5 L4.5 4.5 L8.5 0.5" fill="none" stroke="#555" stroke-width="1"/></svg></div></div>
<div class="c" style="left:502px;top:375px;width:122px"><span class="tx" style="width:103px">DIN 125 A</span><div class="dd"><svg width="9" height="5" viewBox="0 0 9 5" style="position:absolute;left:2.5px;top:6px"><path d="M0.5 0.5 L4.5 4.5 L8.5 0.5" fill="none" stroke="#555" stroke-width="1"/></svg></div></div>
<div class="c" style="left:624px;top:375px;width:122px"><span class="tx" style="width:103px">Standaard geslecteerd</span><div class="dd"><svg width="9" height="5" viewBox="0 0 9 5" style="position:absolute;left:2.5px;top:6px"><path d="M0.5 0.5 L4.5 4.5 L8.5 0.5" fill="none" stroke="#555" stroke-width="1"/></svg></div></div>
<div class="c" style="left:746px;top:375px;width:50px"><div class="cb"></div></div>
<div class="rh" style="top:393px"><span>B7</span></div>
<div class="c" style="left:397px;top:393px;width:105px"><span class="tx" style="width:86px">Moer</span><div class="dd"><svg width="9" height="5" viewBox="0 0 9 5" style="position:absolute;left:2.5px;top:6px"><path d="M0.5 0.5 L4.5 4.5 L8.5 0.5" fill="none" stroke="#555" stroke-width="1"/></svg></div></div>
<div class="c" style="left:502px;top:393px;width:122px"><span class="tx" style="width:103px">DIN 555</span><div class="dd"><svg width="9" height="5" viewBox="0 0 9 5" style="position:absolute;left:2.5px;top:6px"><path d="M0.5 0.5 L4.5 4.5 L8.5 0.5" fill="none" stroke="#555" stroke-width="1"/></svg></div></div>
<div class="c" style="left:624px;top:393px;width:122px"><span class="tx" style="width:103px">Standaard geslecteerd</span><div class="dd"><svg width="9" height="5" viewBox="0 0 9 5" style="position:absolute;left:2.5px;top:6px"><path d="M0.5 0.5 L4.5 4.5 L8.5 0.5" fill="none" stroke="#555" stroke-width="1"/></svg></div></div>
<div class="c" style="left:746px;top:393px;width:50px"><div class="cb"></div></div>
<div class="rh" style="top:411px"><span>B8</span></div>
<div class="c" style="left:397px;top:411px;width:105px"><span class="tx" style="width:86px">Moer</span><div class="dd"><svg width="9" height="5" viewBox="0 0 9 5" style="position:absolute;left:2.5px;top:6px"><path d="M0.5 0.5 L4.5 4.5 L8.5 0.5" fill="none" stroke="#555" stroke-width="1"/></svg></div></div>
<div class="c" style="left:502px;top:411px;width:122px"><span class="tx" style="width:103px">DIN 555</span><div class="dd"><svg width="9" height="5" viewBox="0 0 9 5" style="position:absolute;left:2.5px;top:6px"><path d="M0.5 0.5 L4.5 4.5 L8.5 0.5" fill="none" stroke="#555" stroke-width="1"/></svg></div></div>
<div class="c" style="left:624px;top:411px;width:122px"><span class="tx" style="width:103px">Standaard niet geselecteerd</span><div class="dd"><svg width="9" height="5" viewBox="0 0 9 5" style="position:absolute;left:2.5px;top:6px"><path d="M0.5 0.5 L4.5 4.5 L8.5 0.5" fill="none" stroke="#555" stroke-width="1"/></svg></div></div>
<div class="c" style="left:746px;top:411px;width:50px"><div class="cb"></div></div>
<div class="rh" style="top:429px"><span>C1</span></div>
<div class="c" style="left:397px;top:429px;width:105px"><span class="tx" style="width:86px">Moer</span><div class="dd"><svg width="9" height="5" viewBox="0 0 9 5" style="position:absolute;left:2.5px;top:6px"><path d="M0.5 0.5 L4.5 4.5 L8.5 0.5" fill="none" stroke="#555" stroke-width="1"/></svg></div></div>
<div class="c" style="left:502px;top:429px;width:122px"><span class="tx" style="width:103px">DIN 555</span><div class="dd"><svg width="9" height="5" viewBox="0 0 9 5" style="position:absolute;left:2.5px;top:6px"><path d="M0.5 0.5 L4.5 4.5 L8.5 0.5" fill="none" stroke="#555" stroke-width="1"/></svg></div></div>
<div class="c" style="left:624px;top:429px;width:122px"><span class="tx" style="width:103px">Standaard niet geselecteerd</span><div class="dd"><svg width="9" height="5" viewBox="0 0 9 5" style="position:absolute;left:2.5px;top:6px"><path d="M0.5 0.5 L4.5 4.5 L8.5 0.5" fill="none" stroke="#555" stroke-width="1"/></svg></div></div>
<div class="c" style="left:746px;top:429px;width:50px"><div class="cb"></div></div>
<div class="rh" style="top:447px"><span>C2</span></div>
<div class="c" style="left:397px;top:447px;width:105px"><span class="tx" style="width:86px">Moer</span><div class="dd"><svg width="9" height="5" viewBox="0 0 9 5" style="position:absolute;left:2.5px;top:6px"><path d="M0.5 0.5 L4.5 4.5 L8.5 0.5" fill="none" stroke="#555" stroke-width="1"/></svg></div></div>
<div class="c" style="left:502px;top:447px;width:122px"><span class="tx" style="width:103px">DIN 555</span><div class="dd"><svg width="9" height="5" viewBox="0 0 9 5" style="position:absolute;left:2.5px;top:6px"><path d="M0.5 0.5 L4.5 4.5 L8.5 0.5" fill="none" stroke="#555" stroke-width="1"/></svg></div></div>
<div class="c" style="left:624px;top:447px;width:122px"><span class="tx" style="width:103px">Standaard niet geselecteerd</span><div class="dd"><svg width="9" height="5" viewBox="0 0 9 5" style="position:absolute;left:2.5px;top:6px"><path d="M0.5 0.5 L4.5 4.5 L8.5 0.5" fill="none" stroke="#555" stroke-width="1"/></svg></div></div>
<div class="c" style="left:746px;top:447px;width:50px"><div class="cb"></div></div>
<div class="rh" style="top:465px"><span>C3</span></div>
<div class="c" style="left:397px;top:465px;width:105px"><span class="tx" style="width:86px">Ring</span><div class="dd"><svg width="9" height="5" viewBox="0 0 9 5" style="position:absolute;left:2.5px;top:6px"><path d="M0.5 0.5 L4.5 4.5 L8.5 0.5" fill="none" stroke="#555" stroke-width="1"/></svg></div></div>
<div class="c" style="left:502px;top:465px;width:122px"><span class="tx" style="width:103px">DIN 125 A</span><div class="dd"><svg width="9" height="5" viewBox="0 0 9 5" style="position:absolute;left:2.5px;top:6px"><path d="M0.5 0.5 L4.5 4.5 L8.5 0.5" fill="none" stroke="#555" stroke-width="1"/></svg></div></div>
<div class="c" style="left:624px;top:465px;width:122px"><span class="tx" style="width:103px">Standaard niet geselecteerd</span><div class="dd"><svg width="9" height="5" viewBox="0 0 9 5" style="position:absolute;left:2.5px;top:6px"><path d="M0.5 0.5 L4.5 4.5 L8.5 0.5" fill="none" stroke="#555" stroke-width="1"/></svg></div></div>
<div class="c" style="left:746px;top:465px;width:50px"><div class="cb"></div></div>
<div class="rh" style="top:483px"><span>C4</span></div>
<div class="c" style="left:397px;top:483px;width:105px"><span class="tx" style="width:86px">Vierkante ring</span><div class="dd"><svg width="9" height="5" viewBox="0 0 9 5" style="position:absolute;left:2.5px;top:6px"><path d="M0.5 0.5 L4.5 4.5 L8.5 0.5" fill="none" stroke="#555" stroke-width="1"/></svg></div></div>
<div class="c" style="left:502px;top:483px;width:122px"><span class="tx" style="width:103px">SquareWasher100x100x10</span><div class="dd"><svg width="9" height="5" viewBox="0 0 9 5" style="position:absolute;left:2.5px;top:6px"><path d="M0.5 0.5 L4.5 4.5 L8.5 0.5" fill="none" stroke="#555" stroke-width="1"/></svg></div></div>
<div class="c" style="left:624px;top:483px;width:122px"><span class="tx" style="width:103px">Standaard niet geselecteerd</span><div class="dd"><svg width="9" height="5" viewBox="0 0 9 5" style="position:absolute;left:2.5px;top:6px"><path d="M0.5 0.5 L4.5 4.5 L8.5 0.5" fill="none" stroke="#555" stroke-width="1"/></svg></div></div>
<div class="c" style="left:746px;top:483px;width:50px"><div class="cb"></div></div>
<div class="rh" style="top:501px"><span>C5</span></div>
<div class="c" style="left:397px;top:501px;width:105px"><span class="tx" style="width:86px">Vierkante ring</span><div class="dd"><svg width="9" height="5" viewBox="0 0 9 5" style="position:absolute;left:2.5px;top:6px"><path d="M0.5 0.5 L4.5 4.5 L8.5 0.5" fill="none" stroke="#555" stroke-width="1"/></svg></div></div>
<div class="c" style="left:502px;top:501px;width:122px"><span class="tx" style="width:103px">SquareWasher100x100x10</span><div class="dd"><svg width="9" height="5" viewBox="0 0 9 5" style="position:absolute;left:2.5px;top:6px"><path d="M0.5 0.5 L4.5 4.5 L8.5 0.5" fill="none" stroke="#555" stroke-width="1"/></svg></div></div>
<div class="c" style="left:624px;top:501px;width:122px"><span class="tx" style="width:103px">Standaard niet geselecteerd</span><div class="dd"><svg width="9" height="5" viewBox="0 0 9 5" style="position:absolute;left:2.5px;top:6px"><path d="M0.5 0.5 L4.5 4.5 L8.5 0.5" fill="none" stroke="#555" stroke-width="1"/></svg></div></div>
<div class="c" style="left:746px;top:501px;width:50px"><div class="cb"></div></div>
<div class="rh" style="top:519px"><span>C6</span></div>
<div class="c" style="left:397px;top:519px;width:105px"><span class="tx" style="width:86px">Ring</span><div class="dd"><svg width="9" height="5" viewBox="0 0 9 5" style="position:absolute;left:2.5px;top:6px"><path d="M0.5 0.5 L4.5 4.5 L8.5 0.5" fill="none" stroke="#555" stroke-width="1"/></svg></div></div>
<div class="c" style="left:502px;top:519px;width:122px"><span class="tx" style="width:103px">DIN 125 A</span><div class="dd"><svg width="9" height="5" viewBox="0 0 9 5" style="position:absolute;left:2.5px;top:6px"><path d="M0.5 0.5 L4.5 4.5 L8.5 0.5" fill="none" stroke="#555" stroke-width="1"/></svg></div></div>
<div class="c" style="left:624px;top:519px;width:122px"><span class="tx" style="width:103px">Standaard niet geselecteerd</span><div class="dd"><svg width="9" height="5" viewBox="0 0 9 5" style="position:absolute;left:2.5px;top:6px"><path d="M0.5 0.5 L4.5 4.5 L8.5 0.5" fill="none" stroke="#555" stroke-width="1"/></svg></div></div>
<div class="c" style="left:746px;top:519px;width:50px"><div class="cb"></div></div>
<div class="rh" style="top:537px"><span>C7</span></div>
<div class="c" style="left:397px;top:537px;width:105px"><span class="tx" style="width:86px">Moer</span><div class="dd"><svg width="9" height="5" viewBox="0 0 9 5" style="position:absolute;left:2.5px;top:6px"><path d="M0.5 0.5 L4.5 4.5 L8.5 0.5" fill="none" stroke="#555" stroke-width="1"/></svg></div></div>
<div class="c" style="left:502px;top:537px;width:122px"><span class="tx" style="width:103px">DIN 555</span><div class="dd"><svg width="9" height="5" viewBox="0 0 9 5" style="position:absolute;left:2.5px;top:6px"><path d="M0.5 0.5 L4.5 4.5 L8.5 0.5" fill="none" stroke="#555" stroke-width="1"/></svg></div></div>
<div class="c" style="left:624px;top:537px;width:122px"><span class="tx" style="width:103px">Standaard niet geselecteerd</span><div class="dd"><svg width="9" height="5" viewBox="0 0 9 5" style="position:absolute;left:2.5px;top:6px"><path d="M0.5 0.5 L4.5 4.5 L8.5 0.5" fill="none" stroke="#555" stroke-width="1"/></svg></div></div>
<div class="c" style="left:746px;top:537px;width:50px"><div class="cb"></div></div>
<div class="rh" style="top:555px"><span style="font-weight:bold;font-family:'Liberation Serif',serif;font-size:13px;top:1px">C8</span></div>
<div class="c" style="left:397px;top:555px;width:105px"><span class="tx" style="width:86px">Moer</span><div class="dd"><svg width="9" height="5" viewBox="0 0 9 5" style="position:absolute;left:2.5px;top:6px"><path d="M0.5 0.5 L4.5 4.5 L8.5 0.5" fill="none" stroke="#555" stroke-width="1"/></svg></div></div>
<div class="c" style="left:502px;top:555px;width:122px"><span class="tx" style="width:103px">DIN 555</span><div class="dd"><svg width="9" height="5" viewBox="0 0 9 5" style="position:absolute;left:2.5px;top:6px"><path d="M0.5 0.5 L4.5 4.5 L8.5 0.5" fill="none" stroke="#555" stroke-width="1"/></svg></div></div>
<div class="c" style="left:624px;top:555px;width:122px"><span class="tx" style="width:103px">Standaard niet geselecteerd</span><div class="dd"><svg width="9" height="5" viewBox="0 0 9 5" style="position:absolute;left:2.5px;top:6px"><path d="M0.5 0.5 L4.5 4.5 L8.5 0.5" fill="none" stroke="#555" stroke-width="1"/></svg></div></div>
<div class="c" style="left:746px;top:555px;width:50px"><div class="cb"></div></div>
<!-- scrollbar -->
<div class="abs" style="left:798px;top:105px;width:17px;height:482px;background:#7096c0"></div>
<div class="abs" style="left:799px;top:106px;width:15px;height:15px;background:linear-gradient(90deg,#d6e4f6,#c4d6f0);border:1px solid #88a8d0"></div>
<svg class="abs" style="left:801px;top:110px" width="11" height="6" viewBox="0 0 11 6"><path d="M5.5 0L11 6L0 6Z" fill="#3d4f70"/></svg>
<div class="abs" style="left:799px;top:571px;width:15px;height:15px;background:linear-gradient(90deg,#d6e4f6,#c4d6f0);border:1px solid #88a8d0"></div>
<svg class="abs" style="left:801px;top:576px" width="11" height="6" viewBox="0 0 11 6"><path d="M0 0L11 0L5.5 6Z" fill="#3d4f70"/></svg>

<!-- bottom fields -->
<div class="lp" style="left:379px;top:596px;width:141px;height:23px"></div>
<div class="lp" style="left:379px;top:624px;width:141px;height:23px"></div>
<div class="lp" style="left:379px;top:654px;width:141px;height:24px"></div>
<div class="t11" style="left:379px;top:598.5px;letter-spacing:-0.2px">A: Groep afstand Start:</div>
<div class="t11" style="left:379px;top:624.5px;letter-spacing:-0.2px">B: Groep afstand Start:</div>
<div class="t11" style="left:379px;top:655.5px;letter-spacing:-0.2px">C: Groep afstand Start:</div>
<div class="tb" style="left:521px;top:595px;width:97px;height:19px">0</div>
<div class="tb" style="left:521px;top:624px;width:97px;height:19px">100</div>
<div class="tb" style="left:521px;top:653px;width:97px;height:19px">50</div>
<div class="lp" style="left:624px;top:597px;width:62px;height:23px"></div>
<div class="lp" style="left:624px;top:624px;width:62px;height:23px"></div>
<div class="lp" style="left:624px;top:654px;width:62px;height:24px"></div>
<div class="t11" style="left:646px;top:598.5px;letter-spacing:-0.2px">A Einde:</div>
<div class="t11" style="left:646px;top:624.5px;letter-spacing:-0.2px">B Einde:</div>
<div class="t11" style="left:646px;top:655.5px;letter-spacing:-0.2px">C Einde:</div>
<div class="tb" style="left:692px;top:595px;width:98px;height:19px">0</div>
<div class="tb" style="left:692px;top:624px;width:98px;height:19px">0</div>
<div class="tb" style="left:692px;top:653px;width:98px;height:19px">0</div>
</body></html>
